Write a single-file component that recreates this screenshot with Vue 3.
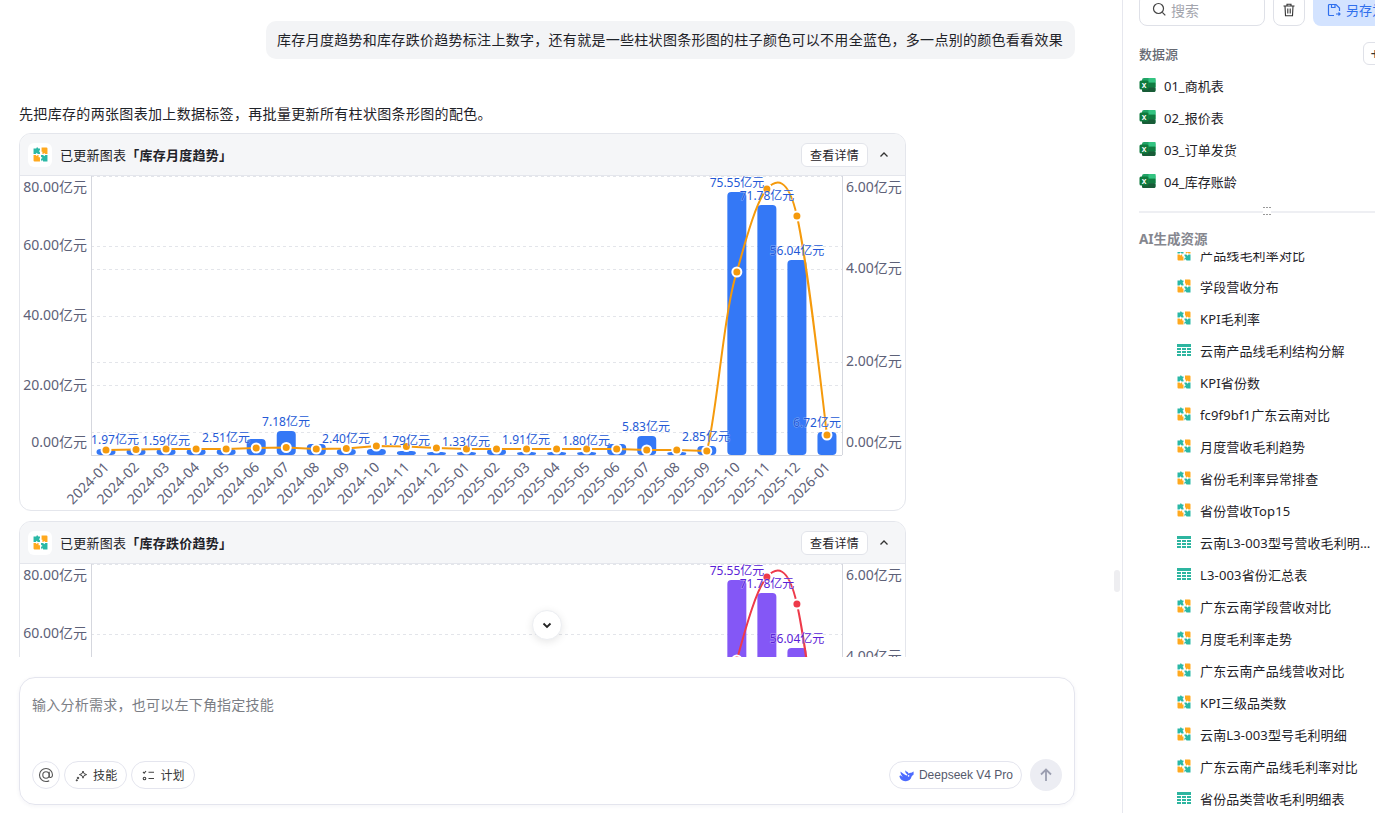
<template>
  <div class="page">
    <main class="main">
      <div class="messages">
        <div class="user-row">
          <div class="bubble">库存月度趋势和库存跌价趋势标注上数字，还有就是一些柱状图条形图的柱子颜色可以不用全蓝色，多一点别的颜色看看效果</div>
        </div>
        <p class="answer">先把库存的两张图表加上数据标签，再批量更新所有柱状图条形图的配色。</p>

        <div v-for="chart in charts" :key="chart.name" class="chart-card">
          <div class="card-head">
            <span class="head-icon">
              <svg width="15" height="15" viewBox="0 0 14 14"><use href="#puzzle" /></svg>
            </span>
            <span class="head-text">已更新图表<b>「{{ chart.name }}」</b></span>
            <button class="detail-btn">查看详情</button>
            <svg class="chevron" width="12" height="12" viewBox="0 0 12 12"><path d="M2.5 7.5 6 4l3.5 3.5" fill="none" stroke="#333" stroke-width="1.3" /></svg>
          </div>
          <svg class="plot" width="885" height="335" viewBox="20 176 885 335">
            <line v-for="y in grid" :key="y" x1="91" x2="842" :y1="y + 0.5" :y2="y + 0.5" stroke="#e3e5ea" stroke-dasharray="3 3" />
            <line x1="91.5" x2="91.5" y1="176" y2="455" stroke="#d5d7de" />
            <line x1="842.5" x2="842.5" y1="176" y2="455" stroke="#d5d7de" />
            <line x1="91" x2="842" y1="455.5" y2="455.5" stroke="#d5d7de" />

            <text v-for="t in leftTicks" :key="t.label" class="tick" x="87" :y="t.y" text-anchor="end">{{ t.label }}</text>
            <text v-for="t in rightTicks" :key="t.label" class="tick" x="846" :y="t.y">{{ t.label }}</text>

            <rect
              v-for="b in bars"
              :key="b.month"
              :x="b.x - 9.5"
              :y="b.y"
              width="19"
              :height="455 - b.y"
              rx="4"
              :fill="chart.bar"
            />
            <path :d="linePath" fill="none" :stroke="chart.line" stroke-width="2" />
            <circle
              v-for="b in bars"
              :key="b.month"
              :cx="b.x"
              :cy="b.ly"
              r="4.5"
              :fill="chart.line"
              stroke="#fff"
              stroke-width="2"
            />
            <text
              v-for="l in labels"
              :key="l.text"
              class="data-label"
              :x="l.x"
              :y="l.y"
              text-anchor="middle"
              :fill="chart.label"
            >{{ l.text }}</text>
            <text
              v-for="b in bars"
              :key="b.month"
              class="month"
              text-anchor="end"
              :transform="`translate(${b.x + 4} 468) rotate(-45)`"
            >{{ b.month }}</text>
          </svg>
        </div>
        <button class="to-bottom">
          <svg width="12" height="12" viewBox="0 0 12 12"><path d="M2.5 4.5 6 8l3.500-3.500" fill="none" stroke="#222" stroke-width="1.800" /></svg>
        </button>
      </div>

      <div class="composer">
        <div class="placeholder">输入分析需求，也可以左下角指定技能</div>
        <div class="tools">
          <button class="pill at">
            <svg width="18" height="18" viewBox="0 0 18 18" fill="none" stroke="#555" stroke-width="1.100"><circle cx="9" cy="9" r="3.200" /><path d="M12.200 5.800v4.200c0 2.300 3.300 2 3.300-1 0-3.800-2.900-6.500-6.500-6.500S2.500 5.200 2.500 9 5.400 15.500 9 15.500c1.300 0 2.300-.3 3.200-.8" /></svg>
          </button>
          <button class="pill">
            <svg width="13" height="13" viewBox="0 0 13 13" fill="none" stroke="#444" stroke-width="1"><path d="M8 2l1 2.600 2.600 1-2.600 1L8 9.200 7 6.600l-2.600-1 2.600-1z" /><circle cx="3" cy="9" r=".8" fill="#444" /><circle cx="1.800" cy="11.300" r=".6" fill="#444" /></svg>
            技能
          </button>
          <button class="pill">
            <svg width="13" height="13" viewBox="0 0 13 13" fill="none" stroke="#444" stroke-width="1.100"><path d="M1 3l1.200 1.200L4 2M6.500 3.200H12M6.500 9.500H12" /><circle cx="2.500" cy="9.500" r="1.300" /></svg>
            计划
          </button>
          <span class="spacer"></span>
          <button class="pill model">
            <svg width="15" height="13" viewBox="0 0 16 13"><path d="M15.500 2.300c-.4-.2-.6.300-.9.400-.5.500-1 .8-1.700.8-1-.1-1.900.3-2.700 1-.2-1-.8-1.500-1.600-1.900-.4-.2-.9-.4-1.200-.8l-.3-.8c0 .2-.2.200-.3.300-.4 1.700.4 2.900 1.900 3.800.2.100.2.200.2.400-.1.300-.2.600-.3.900-.1.200-.2.200-.4.200C6.200 6.200 4.100 4 1.900 2.500c-.2-.1-.4-.2-.3.100-.1 2 .9 3.700 2.300 5.200-.7.100-1.600-1-2.500-1.500C.7 7.100.4 7 .5 7.500 1 10 3.300 12.300 6.700 12.500c2.200.1 4.600-.8 5.900-2.800.5-.8.600-1.700 1-2.300.4-.6 1.900-1.400 1.900-1.900.1-1 .2-2.200 0-3.200z" fill="#4d6bfe" /><circle cx="10.200" cy="6.800" r=".9" fill="#fff" /></svg>
            <span class="model-name">Deepseek V4 Pro</span>
          </button>
          <button class="send">
            <svg width="16" height="16" viewBox="0 0 16 16" fill="none" stroke="#9b9eb0" stroke-width="1.800"><path d="M8 14V2.500M3 7.500l5-5 5 5" /></svg>
          </button>
        </div>
      </div>
      <span class="resize-handle"></span>
    </main>

    <aside class="side">
      <div class="search-row">
        <div class="search">
          <svg width="15" height="15" viewBox="0 0 15 15" fill="none" stroke="#444" stroke-width="1.200"><circle cx="6.500" cy="6.500" r="5" /><path d="m10.300 10.300 3 3" /></svg>
          <span>搜索</span>
        </div>
        <button class="trash">
          <svg width="14" height="14" viewBox="0 0 14 14" fill="none" stroke="#333" stroke-width="1.100"><path d="M1.500 3h11M5 3V1.300h4V3M3 3l.5 9.700h7L11 3M5.800 5.500v5M8.200 5.500v5" /></svg>
        </button>
        <button class="save">
          <svg width="14" height="14" viewBox="0 0 14 14" fill="none" stroke="#2f6fed" stroke-width="1.200"><path d="M7 12.500H2.500a1 1 0 0 1-1-1v-9a1 1 0 0 1 1-1H9l3.500 3.500V8" /><path d="M4.500 1.500v3h3.500v-3M9 11h4M11.500 9.500 13 11l-1.500 1.500" /></svg>
          另存为
        </button>
      </div>

      <div class="section-head">
        <span>数据源</span>
        <button class="add">+</button>
      </div>
      <ul class="files">
        <li v-for="f in files" :key="f">
          <svg width="17" height="16" viewBox="0 0 17 16">
            <rect x="3" y="1" width="13.500" height="14" rx="2" fill="#21a366" />
            <rect x="9.500" y="1" width="7" height="4.700" fill="#33c481" />
            <rect x="9.500" y="5.700" width="7" height="4.600" fill="#107c41" />
            <rect x="3" y="10.300" width="13.500" height="4.700" rx="1.500" fill="#185c37" />
            <rect x="0.500" y="3.500" width="9" height="9" rx="1.500" fill="#0f7a3d" />
            <text x="5" y="10.500" class="xl" text-anchor="middle">X</text>
          </svg>
          {{ f }}
        </li>
      </ul>

      <div class="divider"><span class="grip">
        <i v-for="n in 6" :key="n"></i>
      </span></div>

      <div class="ai-title">AI生成资源</div>
      <div class="resources">
        <ul>
          <li v-for="r in resources" :key="r.name">
            <svg v-if="r.type === 'chart'" width="14" height="14" viewBox="0 0 14 14"><use href="#puzzle" /></svg>
            <svg v-else width="14" height="14" viewBox="0 0 14 14" fill="#2db5a0">
              <path d="M0 1h14v3H0zM0 5h4v2H0zM5 5h4v2H5zM10 5h4v2h-4zM0 8h4v2H0zM5 8h4v2H5zM10 8h4v2h-4zM0 11h4v2H0zM5 11h4v2H5zM10 11h4v2h-4z" />
            </svg>
            <span class="res-name">{{ r.name }}</span>
          </li>
        </ul>
      </div>
    </aside>

    <svg class="defs" width="0" height="0">
      <symbol id="puzzle" viewBox="0 0 14 14">
        <path d="M.5 1.500H3L3.800 0 5 1.500H6.500V3L5.500 3.800 6.500 5V6.500H4.500L3.500 5.300 2.500 6.500H.5z" fill="#2ab8a6" />
        <path d="M8 .5H12.500a1 1 0 0 1 1 1V6.500H11.500L10.500 5.500 9.500 6.500H8.800V4.500H8z" fill="#ffa91f" />
        <path d="M.5 7.500H2.500L3.500 8.500 4.500 7.500H5.200V9.500H6.500V13.500H1.500a1 1 0 0 1-1-1z" fill="#ffa91f" />
        <path d="M7.500 7.500H9.500L10.500 8.700 11.500 7.500H13.500V13.500H9.500L8.500 12 7.500 13.500V11L9 10.200 7.500 9z" fill="#2ab8a6" />
      </symbol>
    </svg>
  </div>
</template>

<script setup>
const charts = [
  { name: "库存月度趋势", bar: "#3478f6", line: "#f59a0c", label: "#2459d6" },
  { name: "库存跌价趋势", bar: "#8457f6", line: "#ee3a4a", label: "#5a22d6" },
]

const grid = [176, 246, 269, 316, 362, 385, 432]
const leftTicks = [
  { label: "80.00亿元", y: 192 },
  { label: "60.00亿元", y: 250 },
  { label: "40.00亿元", y: 320 },
  { label: "20.00亿元", y: 390 },
  { label: "0.00亿元", y: 447 },
]
const rightTicks = [
  { label: "6.00亿元", y: 192 },
  { label: "4.00亿元", y: 273 },
  { label: "2.00亿元", y: 366 },
  { label: "0.00亿元", y: 447 },
]

const months = [
  "2024-01", "2024-02", "2024-03", "2024-04", "2024-05", "2024-06", "2024-07", "2024-08", "2024-09",
  "2024-10", "2024-11", "2024-12", "2025-01", "2025-02", "2025-03", "2025-04", "2025-05", "2025-06",
  "2025-07", "2025-08", "2025-09", "2025-10", "2025-11", "2025-12", "2026-01",
]
const barTops = [449, 449, 449, 449, 449, 439, 431, 444, 449, 449, 451, 452, 452, 449, 452, 452, 452, 444, 436, 452, 446, 192, 205, 260, 432]
const lineYs = [450, 449.5, 449, 449, 449, 448, 447.5, 449, 448.5, 446, 446.5, 448, 449, 449, 449, 449, 449, 449, 450, 450, 451, 272, 189, 216, 435]

const bars = months.map((month, i) => ({
  month,
  x: 106 + i * 30.04,
  y: barTops[i],
  ly: lineYs[i],
}))

// flat part is straight segments, only the last stretch gets a curve
const linePath =
  bars.slice(0, 21).map((b, i) => `${i ? "L" : "M"}${b.x} ${b.ly}`).join(" ") +
  ` C716 420 724 310 ${bars[21].x} 272` +
  ` C747 235 757 200 ${bars[22].x} 189` +
  ` C776 179 788 176 ${bars[23].x} 216` +
  ` C807 260 818 360 ${bars[24].x} 435`

const labels = [
  { text: "1.97亿元", x: 115, y: 444 },
  { text: "1.59亿元", x: 166, y: 445 },
  { text: "2.51亿元", x: 226, y: 442 },
  { text: "7.18亿元", x: 286, y: 426 },
  { text: "2.40亿元", x: 346, y: 443 },
  { text: "1.79亿元", x: 406, y: 445 },
  { text: "1.33亿元", x: 466, y: 446 },
  { text: "1.91亿元", x: 526, y: 444 },
  { text: "1.80亿元", x: 586, y: 445 },
  { text: "5.83亿元", x: 646, y: 431 },
  { text: "2.85亿元", x: 706, y: 441 },
  { text: "75.55亿元", x: 737, y: 187 },
  { text: "71.78亿元", x: 767, y: 200 },
  { text: "56.04亿元", x: 797, y: 255 },
  { text: "6.72亿元", x: 817, y: 427 },
]

const files = ["01_商机表", "02_报价表", "03_订单发货", "04_库存账龄"]

const resources = [
  { name: "产品线毛利率对比", type: "chart" },
  { name: "学段营收分布", type: "chart" },
  { name: "KPI毛利率", type: "chart" },
  { name: "云南产品线毛利结构分解", type: "table" },
  { name: "KPI省份数", type: "chart" },
  { name: "fc9f9bf1广东云南对比", type: "chart" },
  { name: "月度营收毛利趋势", type: "chart" },
  { name: "省份毛利率异常排查", type: "chart" },
  { name: "省份营收Top15", type: "chart" },
  { name: "云南L3-003型号营收毛利明细表", type: "table" },
  { name: "L3-003省份汇总表", type: "table" },
  { name: "广东云南学段营收对比", type: "chart" },
  { name: "月度毛利率走势", type: "chart" },
  { name: "广东云南产品线营收对比", type: "chart" },
  { name: "KPI三级品类数", type: "chart" },
  { name: "云南L3-003型号毛利明细", type: "chart" },
  { name: "广东云南产品线毛利率对比", type: "chart" },
  { name: "省份品类营收毛利明细表", type: "table" },
]
</script>

<style>
html,
body {
  margin: 0;
  overflow: hidden;
  background: #fff;
}
</style>

<style scoped>
.page {
  display: flex;
  width: 1375px;
  height: 813px;
  overflow: hidden;
  font-family: "Noto Sans", "Noto Sans CJK SC", sans-serif;
  color: #1f2329;
}

button {
  font-family: inherit;
  cursor: pointer;
}

.main {
  position: relative;
  width: 1122px;
  flex: none;
  display: flex;
  flex-direction: column;
}

.messages {
  position: relative;
  height: 657px;
  overflow: hidden;
  padding: 21px 47px 0 19px;
  box-sizing: border-box;
}

.user-row {
  display: flex;
  justify-content: flex-end;
}

.bubble {
  height: 38px;
  line-height: 38px;
  padding: 0 12px 0 11px;
  background: #f3f4f6;
  border-radius: 10px;
  font-size: 14px;
  letter-spacing: 0.29px;
  white-space: nowrap;
}

.answer {
  margin: 45px 0 9px;
  height: 20px;
  line-height: 20px;
  font-size: 14px;
  letter-spacing: 0.33px;
}

.chart-card {
  width: 887px;
  height: 378px;
  box-sizing: border-box;
  margin-bottom: 10px;
  border: 1px solid #e4e6ec;
  border-radius: 12px;
  overflow: hidden;
}

.card-head {
  height: 42px;
  box-sizing: border-box;
  display: flex;
  align-items: center;
  padding: 0 8px;
  background: #f5f6f8;
  border-bottom: 1px solid #e4e6ec;
}

.head-icon {
  width: 24px;
  height: 24px;
  border-radius: 6px;
  background: #fff;
  display: flex;
  align-items: center;
  justify-content: center;
  margin-right: 8px;
}

.head-text {
  flex: 1;
  font-size: 13px;
  letter-spacing: 0.25px;
}

.head-text b {
  font-weight: 700;
}

.detail-btn {
  width: 67px;
  height: 24px;
  padding: 0;
  background: #fff;
  border: 1px solid #e2e4ea;
  border-radius: 6px;
  font-size: 12px;
  letter-spacing: 0.2px;
  color: #1f2329;
}

.chevron {
  margin: 0 7px 0 10px;
}

.plot {
  display: block;
}

.tick {
  font-size: 14px;
  fill: #5d6178;
}

.month {
  font-size: 14px;
  fill: #5d6178;
}

.data-label {
  font-size: 12px;
  stroke: rgba(255, 255, 255, 0.4);
  stroke-width: 1px;
  paint-order: stroke;
}

.to-bottom {
  position: absolute;
  left: 532px;
  top: 610px;
  width: 30px;
  height: 30px;
  padding: 0;
  border-radius: 50%;
  border: 1px solid #eceef2;
  background: #fff;
  box-shadow: 0 2px 8px rgba(0, 0, 0, 0.1);
  display: flex;
  align-items: center;
  justify-content: center;
}

.composer {
  margin: 20px 0 0 19px;
  width: 1056px;
  height: 128px;
  box-sizing: border-box;
  border: 1px solid #e4e5ee;
  border-radius: 16px;
  box-shadow: 0 1px 4px rgba(30, 40, 90, 0.05);
  padding: 17px 12px 13px;
  display: flex;
  flex-direction: column;
}

.placeholder {
  flex: 1;
  font-size: 14px;
  line-height: 20px;
  letter-spacing: 0.24px;
  color: #7b7e85;
}

.tools {
  display: flex;
  align-items: center;
  gap: 4px;
}

.pill {
  height: 28px;
  padding: 0 9px 0 10px;
  display: flex;
  align-items: center;
  gap: 5px;
  background: #fff;
  border: 1px solid #e4e5ee;
  border-radius: 14px;
  font-size: 12px;
  letter-spacing: 0.2px;
  color: #333;
}

.pill.at {
  width: 28px;
  padding: 0;
  justify-content: center;
}

.spacer {
  flex: 1;
}

.pill.model {
  color: #555a6c;
  padding: 0 8px 0 9px;
  margin-right: 4px;
}

.model-name {
  font-family: "Liberation Sans", sans-serif;
  letter-spacing: 0;
}

.send {
  width: 32px;
  height: 32px;
  padding: 0;
  border: 0;
  border-radius: 50%;
  background: #ecedf3;
  display: flex;
  align-items: center;
  justify-content: center;
}

.resize-handle {
  position: absolute;
  left: 1114px;
  top: 570px;
  width: 6px;
  height: 22px;
  border-radius: 3px;
  background: #eeeef1;
}

.side {
  flex: 1;
  min-width: 0;
  border-left: 1px solid #e6e7ee;
  padding-left: 16px;
  overflow: hidden;
  display: flex;
  flex-direction: column;
}

.search-row {
  display: flex;
  gap: 8px;
  margin-top: -7px;
  width: 300px;
  flex: none;
}

.search {
  width: 126px;
  height: 33px;
  box-sizing: border-box;
  border: 1px solid #dfe1e8;
  border-radius: 8px;
  display: flex;
  align-items: center;
  gap: 4px;
  padding-left: 12px;
  font-size: 14px;
  color: #a3a5ad;
}

.trash {
  width: 32px;
  height: 33px;
  padding: 0;
  background: #fff;
  border: 1px solid #dfe1e8;
  border-radius: 8px;
  display: flex;
  align-items: center;
  justify-content: center;
}

.save {
  width: 90px;
  height: 33px;
  flex: none;
  padding: 0 0 0 14px;
  border: 0;
  border-radius: 8px;
  background: #d3e3ff;
  color: #2f6fed;
  font-size: 13px;
  display: flex;
  align-items: center;
  gap: 5px;
}

.section-head {
  margin-top: 16px;
  height: 23px;
  width: 248px;
  flex: none;
  display: flex;
  align-items: center;
  justify-content: space-between;
  font-size: 13px;
  font-weight: 500;
  color: #666a73;
}

.add {
  width: 24px;
  height: 23px;
  padding: 0;
  background: #fff;
  border: 1px solid #dfe1e8;
  border-radius: 6px;
  font-size: 16px;
  line-height: 1;
  color: #333;
}

.files {
  list-style: none;
  margin: 4px 0 0;
  padding: 0;
}

.files li {
  height: 32px;
  display: flex;
  align-items: center;
  gap: 8px;
  font-size: 13px;
}

.xl {
  font-size: 7px;
  font-weight: 700;
  fill: #fff;
}

.divider {
  position: relative;
  margin-top: 14px;
  height: 2px;
  background: #eeeff3;
  flex: none;
}

.grip {
  position: absolute;
  left: 124px;
  top: -4px;
  width: 8px;
  display: grid;
  grid-template-columns: repeat(3, 1fr);
  row-gap: 6px;
  column-gap: 1px;
  background: #fff;
}

.grip i {
  width: 2px;
  height: 1px;
  background: #999;
}

.ai-title {
  margin-top: 16px;
  height: 20px;
  line-height: 20px;
  padding-bottom: 3px;
  font-size: 13.500px;
  font-weight: 700;
  color: #85878f;
  flex: none;
}

.resources {
  flex: 1;
  min-height: 0;
  overflow: hidden;
  margin-right: 0;
}

.resources ul {
  list-style: none;
  margin: -14px 0 0;
  padding: 0 0 0 38px;
}

.resources li {
  height: 32px;
  display: flex;
  align-items: center;
  gap: 9px;
  font-size: 13px;
  letter-spacing: 0.15px;
}

.res-name {
  flex: 1;
  min-width: 0;
  overflow: hidden;
  white-space: nowrap;
  text-overflow: ellipsis;
}

.defs {
  position: absolute;
}
</style>
